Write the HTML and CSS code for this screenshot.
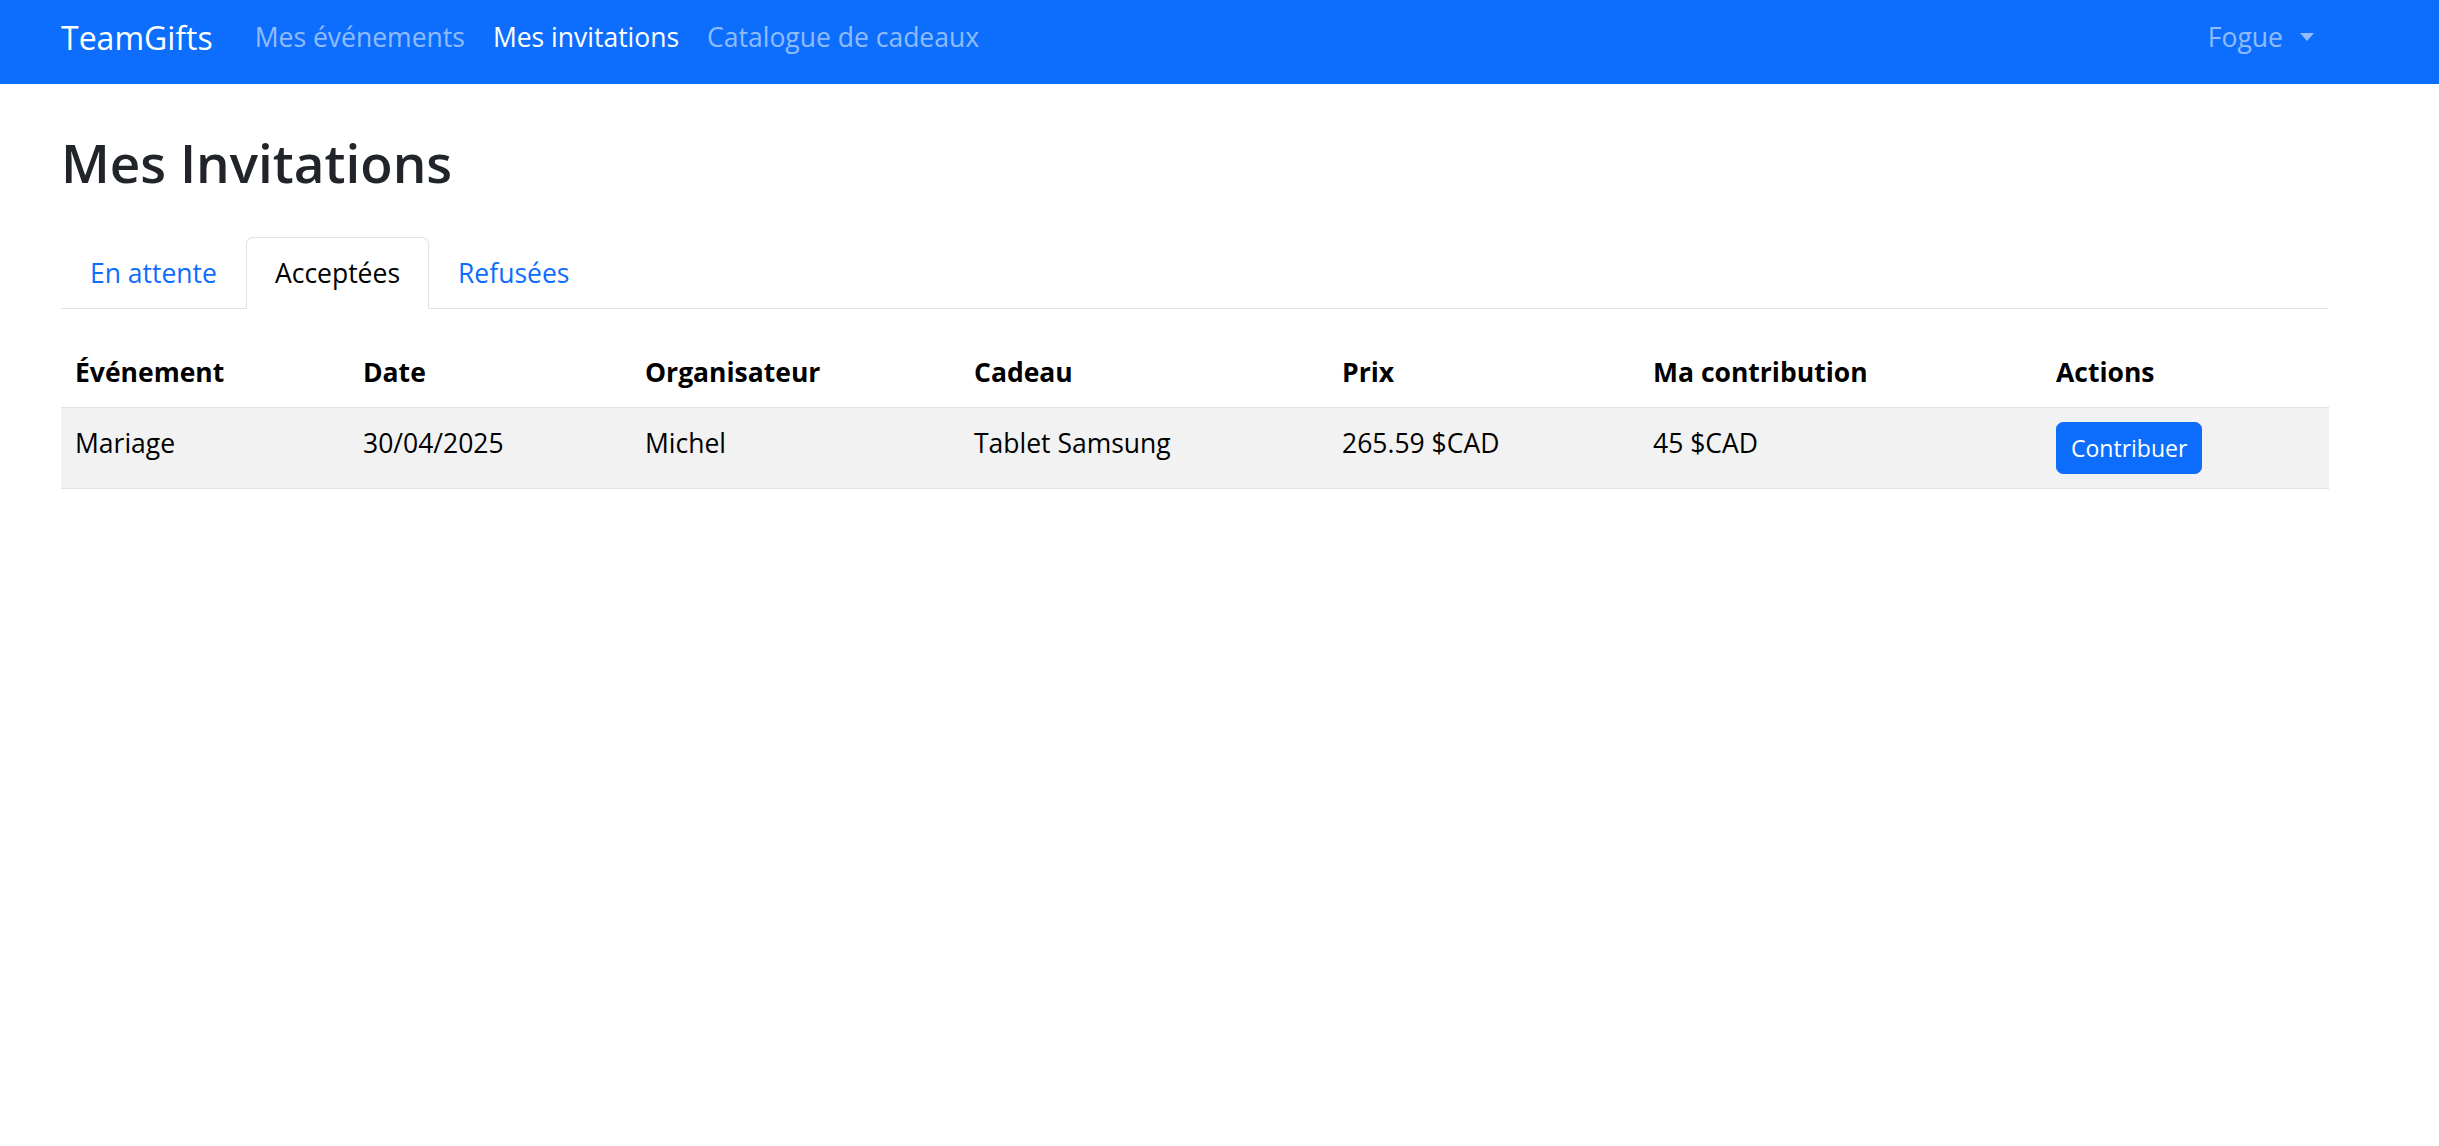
FILE: index.html
```html
<!DOCTYPE html>
<html lang="fr">
<head>
<meta charset="utf-8">
<title>TeamGifts - Mes Invitations</title>
<link rel="stylesheet" href="styles.css">
</head>
<body>
<nav class="navbar">
  <div class="nav-left">
    <a class="brand" href="#">TeamGifts</a>
    <ul class="nav-links">
      <li><a class="nav-link" href="#">Mes événements</a></li>
      <li><a class="nav-link active" href="#">Mes invitations</a></li>
      <li><a class="nav-link" href="#">Catalogue de cadeaux</a></li>
    </ul>
  </div>
  <ul class="nav-links">
    <li><a class="nav-link dropdown-toggle" href="#">Fogue</a></li>
  </ul>
</nav>

<main class="container">
  <h2 class="title">Mes Invitations</h2>

  <ul class="tabs">
    <li><a class="tab" href="#">En attente</a></li>
    <li><a class="tab active" href="#">Acceptées</a></li>
    <li><a class="tab" href="#">Refusées</a></li>
  </ul>

  <table class="table">
    <colgroup>
      <col class="col-event">
      <col class="col-date">
      <col class="col-org">
      <col class="col-gift">
      <col class="col-price">
      <col class="col-contrib">
      <col class="col-actions">
    </colgroup>
    <thead>
      <tr>
        <th>Événement</th>
        <th>Date</th>
        <th>Organisateur</th>
        <th>Cadeau</th>
        <th>Prix</th>
        <th>Ma contribution</th>
        <th>Actions</th>
      </tr>
    </thead>
    <tbody>
      <tr class="striped">
        <td>Mariage</td>
        <td>30/04/2025</td>
        <td>Michel</td>
        <td>Tablet Samsung</td>
        <td>265.59 $CAD</td>
        <td>45 $CAD</td>
        <td><button class="btn" type="button">Contribuer</button></td>
      </tr>
    </tbody>
  </table>
</main>
</body>
</html>
```

FILE: styles.css
```css
* {
  box-sizing: border-box;
}

html, body {
  margin: 0;
  padding: 0;
  background: #ffffff;
}

body {
  font-family: "Open Sans", "Noto Sans", "Liberation Sans", sans-serif;
  font-size: 26.5px;
  line-height: 42px;
  color: #212529;
}

a {
  text-decoration: none;
}

ul {
  list-style: none;
  margin: 0;
  padding: 0;
}

/* Navbar */
.navbar {
  background: #0d6efd;
  height: 84px;
  padding: 0 111px 0 61px;
  display: flex;
  align-items: center;
  justify-content: space-between;
}

.nav-left {
  display: flex;
  align-items: center;
}

.brand {
  color: #ffffff;
  font-size: 32px;
  line-height: 52px;
  padding: 0 0 8px;
  margin-right: 28px;
}

.nav-links {
  display: flex;
  align-items: center;
}

.nav-link {
  display: block;
  padding: 0 14px 10px;
  line-height: 42px;
  color: rgba(255, 255, 255, 0.55);
}

.nav-link.active {
  color: #ffffff;
}

.dropdown-toggle {
  display: flex;
  align-items: center;
}

.dropdown-toggle::after {
  content: "";
  display: inline-block;
  margin-left: 17px;
  margin-top: 0;
  border-top: 8px solid rgba(255, 255, 255, 0.55);
  border-left: 7.5px solid transparent;
  border-right: 7.5px solid transparent;
  border-bottom: 0;
}

/* Main */
.container {
  padding: 0 111px 0 61px;
}

.title {
  font-size: 53px;
  font-weight: 600;
  line-height: 67px;
  margin: 45px 0 41px;
  color: #212529;
}

/* Tabs */
.tabs {
  display: flex;
  border-bottom: 1px solid #dee2e6;
  margin-bottom: 28px;
}

.tab {
  display: block;
  padding: 14px 28px;
  line-height: 42px;
  color: #0d6efd;
  border: 1px solid transparent;
  border-top-left-radius: 7px;
  border-top-right-radius: 7px;
  margin-bottom: -1px;
}

.tab.active {
  color: #000000;
  background: #ffffff;
  border-color: #dee2e6 #dee2e6 #ffffff;
}

/* Table */
.table {
  width: 2268px;
  table-layout: fixed;
  border-collapse: collapse;
  color: #000000;
}

.col-event { width: 288px; }
.col-date { width: 282px; }
.col-org { width: 329px; }
.col-gift { width: 368px; }
.col-price { width: 311px; }
.col-contrib { width: 403px; }
.col-actions { width: 287px; }

.table th,
.table td {
  padding: 14px;
  line-height: 42px;
  text-align: left;
  vertical-align: top;
  border-bottom: 1px solid #dee2e6;
  white-space: nowrap;
}

.table th {
  font-weight: 700;
}

.table .striped td {
  background: #f2f2f2;
}

.btn {
  font-family: inherit;
  font-size: 23px;
  line-height: 36px;
  color: #ffffff;
  background: #0d6efd;
  border: 1px solid #0d6efd;
  border-radius: 7px;
  padding: 7px 14px;
  cursor: pointer;
  vertical-align: top;
}
```
